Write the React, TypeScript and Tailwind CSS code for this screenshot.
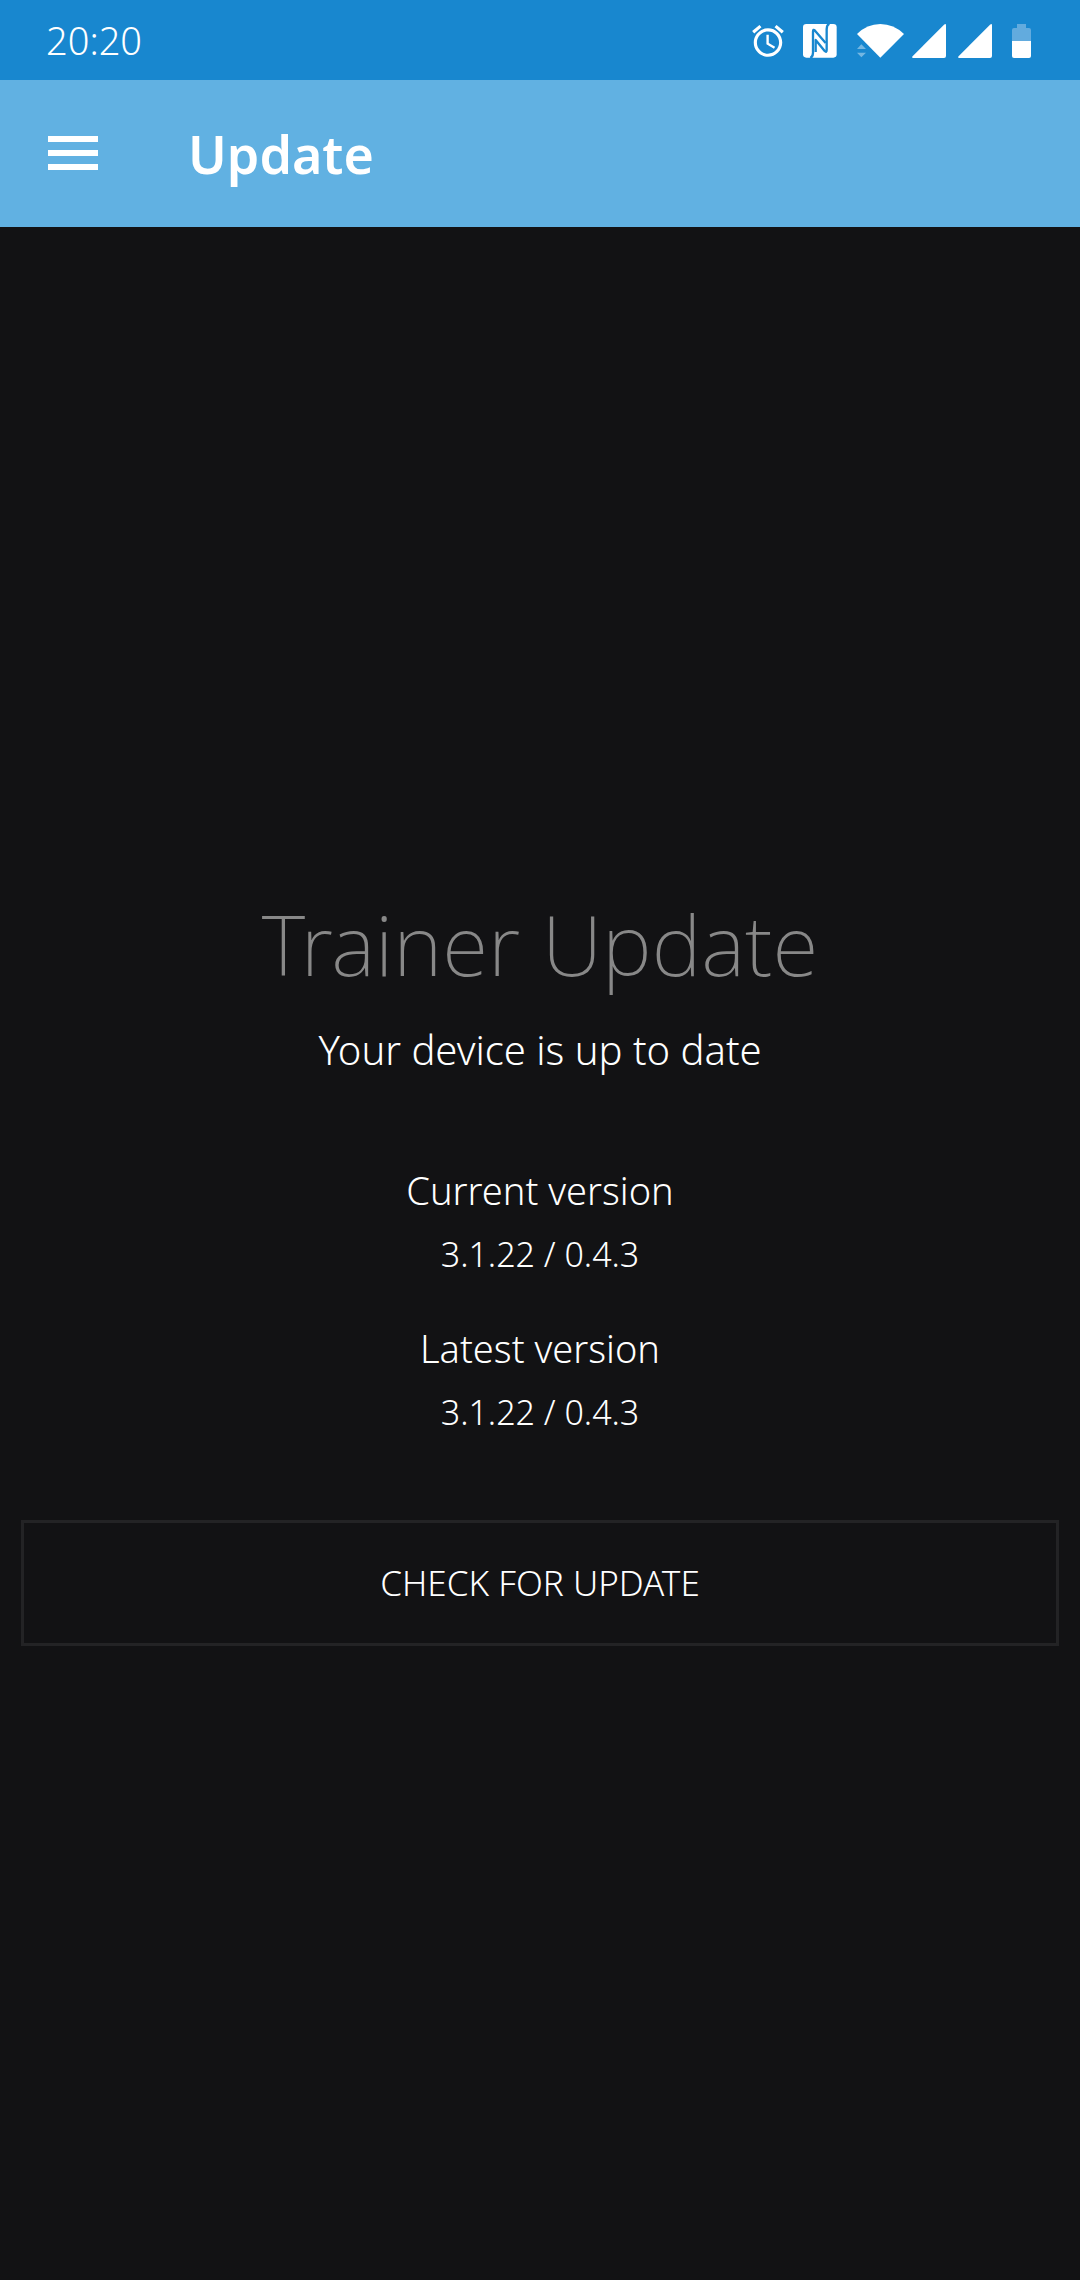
function AlarmIcon() {
  return (
    <svg className="size-[38px]" viewBox="0 0 24 24" fill="currentColor" aria-hidden="true">
      <path d="M22 5.72l-4.6-3.86-1.29 1.53 4.6 3.86L22 5.72zM7.88 3.39L6.6 1.86 2 5.71l1.29 1.53 4.59-3.85zM12.5 8H11v6l4.75 2.85.75-1.23-4-2.37V8zM12 4c-4.97 0-9 4.03-9 9s4.02 9 9 9c4.97 0 9-4.03 9-9s-4.03-9-9-9zm0 16c-3.87 0-7-3.13-7-7s3.13-7 7-7 7 3.13 7 7-3.13 7-7 7z" />
    </svg>
  );
}

function NfcIcon() {
  return (
    <svg className="size-[34px]" viewBox="0 0 102 102" aria-hidden="true">
      <rect width="101" height="101" rx="10" fill="white" />
      <g fill="none" stroke="#1887cf" strokeWidth="7" strokeLinejoin="round">
        <path d="M22 102Q30 98 30 86V23Q30 14 36 20L68 57" />
        <path d="M79 -1Q71 3 71 15V78Q71 87 65 81L38 48V84" />
      </g>
    </svg>
  );
}

function WifiIcon() {
  return (
    <svg className="h-[34px] w-[47px]" viewBox="0 0 141 102" aria-hidden="true">
      <path d="M0 30Q30 0 70 0T141 30L70 101Z" fill="white" />
      <path d="M0 75L13 61L27 75ZM0 86H27L13 100Z" fill="#74b7e2" />
    </svg>
  );
}

function SignalIcon() {
  return (
    <svg className="size-[34px]" viewBox="0 0 34 34" fill="currentColor" aria-hidden="true">
      <path d="M32 .8Q34 -1 34 1.500V32Q34 34 32 34H1.500Q-1 34 .8 32Z" />
    </svg>
  );
}

function BatteryIcon() {
  return (
    <svg className="h-[34px] w-[19px]" viewBox="0 0 19 34" aria-hidden="true">
      <path d="M5 0H14V4H17Q19 4 19 6V17H0V6Q0 4 2 4H5Z" fill="#62abde" />
      <path d="M0 17H19V32Q19 34 17 34H2Q0 34 0 32Z" fill="white" />
    </svg>
  );
}

function Version({ label, value }: { label: string; value: string }) {
  return (
    <div className="flex flex-col gap-3">
      <dt className="text-[38px] leading-[56px]">{label}</dt>
      <dd className="text-[34px] leading-[48px]">{value}</dd>
    </div>
  );
}

export default function App() {
  return (
    <div className="flex min-h-screen flex-col bg-[#121214] font-['Noto_Sans',sans-serif] text-white">
      <div className="flex h-20 shrink-0 items-center justify-between bg-[#1887cf] pr-[49px] pl-[46px]">
        <time className="text-[38px] leading-[48px] font-light">20:20</time>
        <div className="flex items-center pt-0.5">
          <AlarmIcon />
          <div className="ml-4">
            <NfcIcon />
          </div>
          <div className="mr-2 ml-5">
            <WifiIcon />
          </div>
          <div className="flex gap-3">
            <SignalIcon />
            <SignalIcon />
          </div>
          <div className="ml-5">
            <BatteryIcon />
          </div>
        </div>
      </div>

      <header className="flex h-[147px] shrink-0 items-center gap-[90px] bg-[#61b1e2] px-12">
        <button type="button" aria-label="Open menu" className="flex w-[50px] flex-col gap-2 pb-0.5">
          <span className="h-1.5 w-full bg-white" />
          <span className="h-1.5 w-full bg-white" />
          <span className="h-1.5 w-full bg-white" />
        </button>
        <h1 className="text-[52px] leading-[72px] font-semibold">Update</h1>
      </header>

      <main className="flex grow flex-col justify-center px-[21px] text-center font-light">
        <h2 className="pt-8 text-[84px] leading-[100px] font-extralight text-[#888888]">
          Trainer Update
        </h2>
        <p className="mt-7 text-[40px] leading-[56px]">Your device is up to date</p>
        <dl className="my-[84px] flex flex-col gap-[42px]">
          <Version label="Current version" value="3.1.22 / 0.4.3" />
          <Version label="Latest version" value="3.1.22 / 0.4.3" />
        </dl>
        <button
          type="button"
          className="w-full border-[3px] border-[#232325] py-9 text-[35px] leading-[48px] uppercase"
        >
          Check for update
        </button>
      </main>
    </div>
  );
}
